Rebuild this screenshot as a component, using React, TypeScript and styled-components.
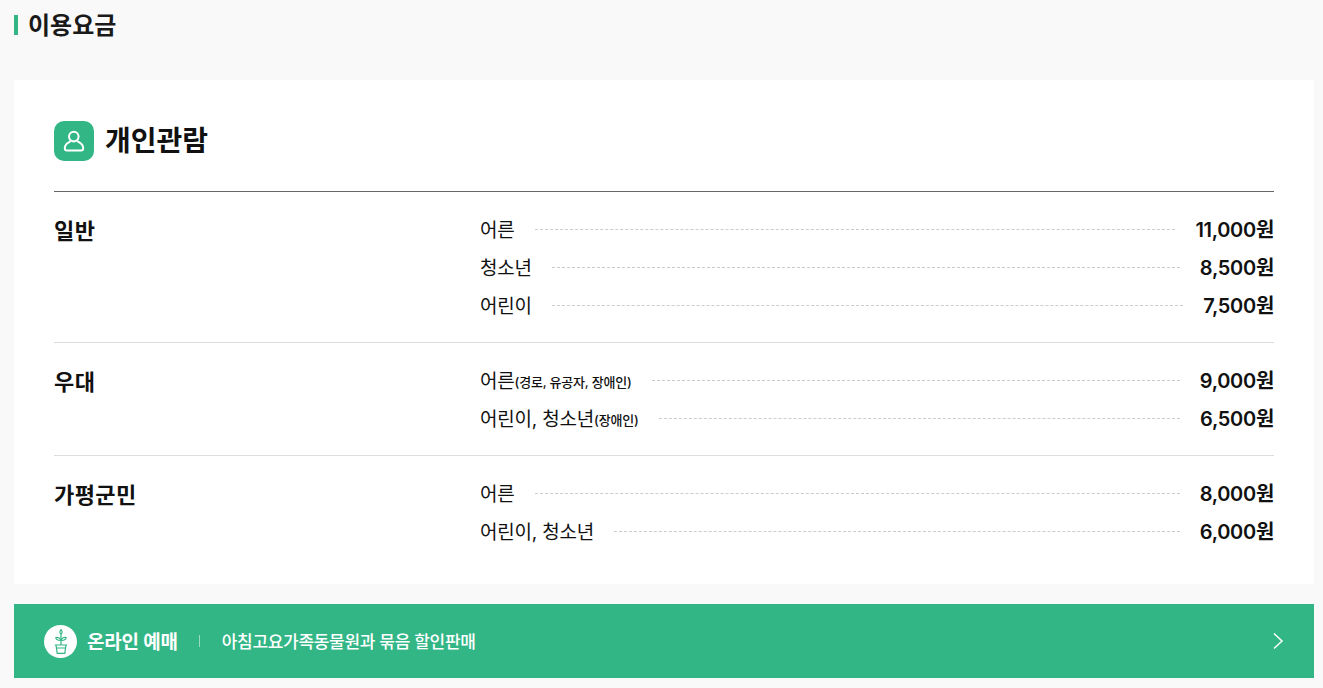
import React from "react";
import styled, { createGlobalStyle } from "styled-components";

const GlobalStyle = createGlobalStyle`
  html, body {
    margin: 0;
    padding: 0;
    background: #f9f9f9;
  }
  body {
    font-family: Inter, "Noto Sans CJK KR", sans-serif;
    color: #111;
  }
`;

const Page = styled.div`
  height: 688px;
  overflow: hidden;
  padding: 0 9px 0 14px;
  box-sizing: border-box;
`;

const PageTitle = styled.h2`
  display: flex;
  align-items: center;
  gap: 10px;
  height: 50px;
  margin: 0 0 30px;
  font-size: 24px;
  font-weight: 700;
  letter-spacing: 0;
  color: #1a1a1a;
  &::before {
    content: "";
    width: 4px;
    height: 20px;
    background: #33b686;
  }
  & > span {
    padding-bottom: 4px;
  }
`;

const Card = styled.section`
  background: #fff;
  padding: 41px 40px 16px;
`;

const CardHeader = styled.div`
  display: flex;
  align-items: center;
  gap: 11px;
  height: 40px;
  padding-bottom: 30px;
  border-bottom: 1px solid #666;
`;

const IconBox = styled.span`
  width: 40px;
  height: 40px;
  border-radius: 10px;
  background: #33b686;
  display: flex;
  align-items: center;
  justify-content: center;
`;

const CardTitle = styled.h3`
  margin: 0;
  font-size: 28px;
  font-weight: 600;
  line-height: 36px;
  letter-spacing: 0;
  color: #111;
`;

const Group = styled.div`
  display: grid;
  grid-template-columns: 426px 1fr;
  padding: 18px 0;
  & + & {
    border-top: 1px solid #ddd;
  }
`;

const GroupName = styled.div`
  padding-top: 2px;
  font-size: 22px;
  font-weight: 600;
  line-height: 38px;
  letter-spacing: 0.4px;
`;

const Row = styled.div`
  display: flex;
  align-items: center;
  height: 38px;
`;

const RowLabel = styled.span`
  padding-bottom: 2px;
  font-size: 19px;
  letter-spacing: -0.2px;
  white-space: nowrap;
  color: #111;
`;

const RowNote = styled.small`
  vertical-align: 1px;
  font-size: 13px;
  font-weight: 500;
  letter-spacing: -0.2px;
`;

const Dots = styled.span`
  flex: 1;
  margin: 0 20px;
  border-top: 1px dashed #ccc;
`;

const Price = styled.strong`
  padding-bottom: 2px;
  font-size: 20px;
  font-weight: 600;
  letter-spacing: -0.3px;
  white-space: nowrap;
  color: #111;
`;

const Banner = styled.a`
  display: flex;
  align-items: center;
  height: 74px;
  margin-top: 20px;
  padding: 0 30px;
  background: #33b686;
  color: #fff;
`;

const BannerIcon = styled.span`
  width: 33px;
  height: 33px;
  border-radius: 50%;
  background: #fff;
  display: flex;
  align-items: center;
  justify-content: center;
  margin-right: 10px;
`;

const BannerTitle = styled.strong`
  padding-bottom: 2px;
  font-size: 19px;
  font-weight: 700;
  letter-spacing: -0.2px;
`;

const BannerDivider = styled.span`
  width: 1px;
  height: 12px;
  margin: 0 22px 0 21px;
  background: rgba(255, 255, 255, 0.5);
`;

const BannerText = styled.span`
  flex: 1;
  padding-bottom: 2px;
  font-size: 17px;
  font-weight: 500;
  letter-spacing: -0.3px;
`;

type PriceRow = { label: string; note?: string; price: string };
type PriceGroup = { name: string; rows: PriceRow[] };

const groups: PriceGroup[] = [
  {
    name: "일반",
    rows: [
      { label: "어른", price: "11,000원" },
      { label: "청소년", price: "8,500원" },
      { label: "어린이", price: "7,500원" },
    ],
  },
  {
    name: "우대",
    rows: [
      { label: "어른", note: "(경로, 유공자, 장애인)", price: "9,000원" },
      { label: "어린이, 청소년", note: "(장애인)", price: "6,500원" },
    ],
  },
  {
    name: "가평군민",
    rows: [
      { label: "어른", price: "8,000원" },
      { label: "어린이, 청소년", price: "6,000원" },
    ],
  },
];

const PersonIcon = () => (
  <svg width="24" height="24" viewBox="0 0 24 24" fill="none" stroke="#fff" strokeWidth="2">
    <circle cx="11.800" cy="7.600" r="4.800" />
    <path d="M8 12.600C5 14 2.800 16.600 2.800 19.200c0 1.400.9 2.300 2.200 2.300h14c1.300 0 2.200-.9 2.200-2.300 0-2.600-2.200-5.200-5.200-6.600" strokeLinecap="round" />
  </svg>
);

const PlantIcon = () => (
  <svg width="20" height="26" viewBox="0 0 20 26" fill="none" stroke="#33b686" strokeWidth="1.2">
    <path d="M10 17V5" />
    <path d="M10 6C8.600 5.200 8.400 3.400 10 1.600 11.600 3.400 11.400 5.200 10 6Z" />
    <path d="M10 12C8.800 9.800 6.800 9.200 4.800 9.600 5.200 11.800 8 13 10 12ZM10 12c1.200-2.200 3.200-2.800 5.200-2.400C14.800 11.800 12 13 10 12Z" />
    <path d="M3.800 17h12.400M5.200 20h9.600M5 17l1.200 8.400h7.600L15 17" />
  </svg>
);

const ChevronIcon = () => (
  <svg width="12" height="18" viewBox="0 0 12 18" fill="none" stroke="#fff" strokeWidth="1.5">
    <path d="M2 1.500 10 9l-8 7.500" />
  </svg>
);

const App: React.FC = () => (
  <Page>
    <GlobalStyle />
    <PageTitle>
      <span>이용요금</span>
    </PageTitle>
    <Card>
      <CardHeader>
        <IconBox>
          <PersonIcon />
        </IconBox>
        <CardTitle>개인관람</CardTitle>
      </CardHeader>
      {groups.map((group) => (
        <Group key={group.name}>
          <GroupName>{group.name}</GroupName>
          <div>
            {group.rows.map((row) => (
              <Row key={row.label}>
                <RowLabel>
                  {row.label}
                  {row.note && <RowNote>{row.note}</RowNote>}
                </RowLabel>
                <Dots />
                <Price>{row.price}</Price>
              </Row>
            ))}
          </div>
        </Group>
      ))}
    </Card>
    <Banner>
      <BannerIcon>
        <PlantIcon />
      </BannerIcon>
      <BannerTitle>온라인 예매</BannerTitle>
      <BannerDivider />
      <BannerText>아침고요가족동물원과 묶음 할인판매</BannerText>
      <ChevronIcon />
    </Banner>
  </Page>
);

export default App;
